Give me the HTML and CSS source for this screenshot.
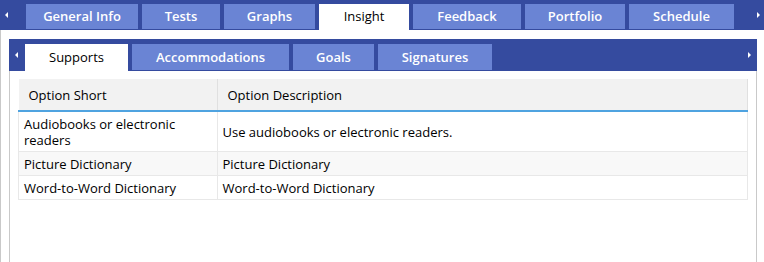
FILE: index.html
```html
<!DOCTYPE html>
<html>
  <head>
    <meta charset="utf-8">
    <title>Insight</title>
    <link rel="stylesheet" href="styles.css">
  </head>
  <body>
    <div class="tabbar main">
      <span class="arrow left"></span>
      <div class="tab">General Info</div>
      <div class="tab">Tests</div>
      <div class="tab">Graphs</div>
      <div class="tab active">Insight</div>
      <div class="tab">Feedback</div>
      <div class="tab">Portfolio</div>
      <div class="tab">Schedule</div>
      <span class="arrow right"></span>
    </div>

    <div class="panel">
      <div class="tabbar sub">
        <span class="arrow left"></span>
        <div class="tab active">Supports</div>
        <div class="tab">Accommodations</div>
        <div class="tab">Goals</div>
        <div class="tab">Signatures</div>
        <span class="arrow right"></span>
      </div>

      <div class="subbody">
        <table class="grid">
          <thead>
            <tr>
              <th class="col-short">Option Short</th>
              <th>Option Description</th>
            </tr>
          </thead>
          <tbody>
            <tr>
              <td>Audiobooks or electronic readers</td>
              <td>Use audiobooks or electronic readers.</td>
            </tr>
            <tr class="alt">
              <td>Picture Dictionary</td>
              <td>Picture Dictionary</td>
            </tr>
            <tr>
              <td>Word-to-Word Dictionary</td>
              <td>Word-to-Word Dictionary</td>
            </tr>
          </tbody>
        </table>
      </div>
    </div>
  </body>
</html>
```

FILE: styles.css
```css
body, html {
    margin: 0;
    padding: 0;
    height: 100%;
    overflow: hidden;
}
body {
    font-family: "Open Sans", "Liberation Sans", sans-serif;
    font-size: 13px;
    color: #000;
    background: #fff;
    display: flex;
    flex-direction: column;
}

/* tab bars */
.tabbar {
    display: grid;
    column-gap: 4px;
    align-items: start;
    background: #354b9f;
    box-sizing: border-box;
}
.tabbar.main {
    grid-template-columns: 22px 112px 78px 91px 90px 108px 100px 105px 1fr;
    height: 30px;
    padding-top: 4px;
}
.tabbar.sub {
    grid-template-columns: 12px 103px 157px 81px 114px 1fr;
    height: 32px;
    padding-top: 5px;
    width: 748px;
}
.tab {
    background: #6a84d4;
    color: #fff;
    font-weight: 600;
    text-align: center;
    white-space: nowrap;
}
.main .tab {
    height: 25px;
    line-height: 25px;
}
.sub .tab {
    height: 26px;
    line-height: 26px;
}
.tab.active {
    background: #fff;
    color: #000;
    font-weight: 500;
}
.main .tab.active { height: 26px; }
.sub .tab.active { height: 27px; }

.arrow {
    width: 0;
    height: 0;
    border-top: 3px solid transparent;
    border-bottom: 3px solid transparent;
    align-self: center;
}
.arrow.left {
    border-right: 3px solid #fff;
    justify-self: start;
}
.arrow.right {
    border-left: 3px solid #fff;
    justify-self: end;
}
.main .arrow { margin-top: -4px; }
.main .arrow.left { margin-left: 5px; }
.main .arrow.right { margin-right: 4px; }
.sub .arrow { margin-top: -5px; }
.sub .arrow.left { margin-left: 6px; }
.sub .arrow.right { margin-right: 6px; }

/* content panels */
.panel {
    flex: 1;
    border-left: 1px solid #c9c9c9;
    padding: 9px 0 0 8px;
    display: flex;
    flex-direction: column;
}
.subbody {
    flex: 1;
    width: 748px;
    box-sizing: border-box;
    border-left: 1px solid #c9c9c9;
    border-right: 1px solid #c9c9c9;
    padding: 8px 8px 0;
}

/* table */
.grid {
    width: 100%;
    border-collapse: collapse;
}
.grid th {
    height: 31px;
    padding: 0 10px;
    text-align: left;
    font-weight: 500;
    background: #f2f2f2;
    border-right: 1px solid #e0e0e0;
    border-bottom: 2px solid #4fa3e0;
}
.grid .col-short { width: 178px; }
.grid td {
    padding: 4px 5px 3px 5px;
    line-height: 16px;
    border: 1px solid #e8e8e8;
}
.grid tr.alt td { background: #f8f8f8; }
```
